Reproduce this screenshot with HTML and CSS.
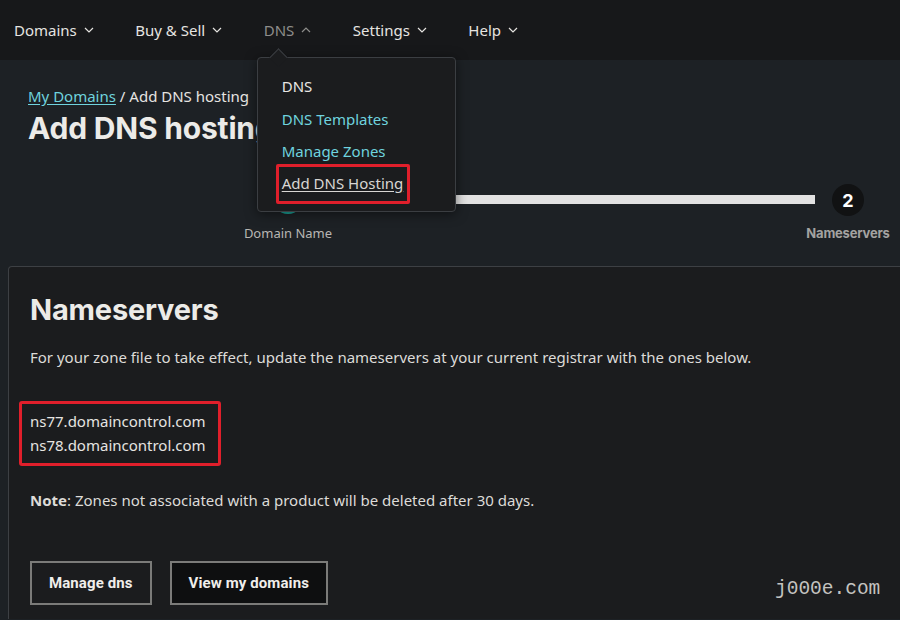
FILE: index.html
```html
<!DOCTYPE html>
<html lang="en">
<head>
<meta charset="utf-8">
<title>Add DNS hosting</title>
<link rel="stylesheet" href="styles.css">
</head>
<body>
<header class="nav">
  <div class="nav-item">Domains <svg class="chev" viewBox="0 0 10 6"><path d="M1 1l4 4 4-4"/></svg></div>
  <div class="nav-item">Buy &amp; Sell <svg class="chev" viewBox="0 0 10 6"><path d="M1 1l4 4 4-4"/></svg></div>
  <div class="nav-item active">DNS <svg class="chev" viewBox="0 0 10 6"><path d="M1 5l4-4 4 4"/></svg>
    <div class="dropdown">
      <span class="caret"></span>
      <a class="dd-item dd-current">DNS</a>
      <a class="dd-item dd-link">DNS Templates</a>
      <a class="dd-item dd-link">Manage Zones</a>
      <a class="dd-item dd-hl"><span>Add DNS Hosting</span></a>
    </div>
  </div>
  <div class="nav-item">Settings <svg class="chev" viewBox="0 0 10 6"><path d="M1 1l4 4 4-4"/></svg></div>
  <div class="nav-item">Help <svg class="chev" viewBox="0 0 10 6"><path d="M1 1l4 4 4-4"/></svg></div>
</header>
<main class="page">
  <div class="crumbs"><a class="crumb-link">My Domains</a> / Add DNS hosting</div>
  <h1 class="title">Add DNS hosting</h1>
  <div class="stepper">
    <span class="dot dot-done"></span>
    <span class="bar"></span>
    <span class="dot dot-cur">2</span>
    <span class="step-label">Domain Name</span>
    <span></span>
    <span class="step-label step-label-cur">Nameservers</span>
  </div>
  <section class="card">
    <h2 class="card-title">Nameservers</h2>
    <p class="lead">For your zone file to take effect, update the nameservers at your current registrar with the ones below.</p>
    <div class="ns-box">
      <div>ns77.domaincontrol.com</div>
      <div>ns78.domaincontrol.com</div>
    </div>
    <p class="note"><b>Note</b>: Zones not associated with a product will be deleted after 30 days.</p>
    <div class="actions">
      <button class="btn">Manage dns</button>
      <button class="btn btn-dark">View my domains</button>
    </div>
    <div class="watermark">j000e.com</div>
  </section>
</main>
</body>
</html>
```
FILE: styles.css
```css
* { box-sizing: border-box; }
html, body { margin: 0; padding: 0; }
body {
  width: 900px;
  height: 620px;
  overflow: hidden;
  background: #1d2125;
  color: #e8e6e3;
  font-family: "Noto Sans", "Open Sans", sans-serif;
  font-size: 15px;
}
.nav {
  height: 60px;
  background: #17181a;
  display: flex;
  align-items: center;
  padding-left: 14px;
  position: relative;
  z-index: 5;
}
.nav-item {
  display: flex;
  align-items: center;
  gap: 7px;
  margin-right: 41.5px;
  font-size: 15px;
  color: #e6e4e1;
  position: relative;
}
.nav-item.active { color: #8e8d8b; }
.chev { width: 10px; height: 6px; fill: none; stroke: currentColor; stroke-width: 1.2; }
.dropdown {
  position: absolute;
  top: 37px;
  left: -7px;
  width: 199px;
  height: 155px;
  background: #1b1c1e;
  border: 1px solid #3b3e42;
  border-radius: 4px;
  padding: 18px 0 0 24px;
  display: flex;
  flex-direction: column;
  box-shadow: 0 2px 12px rgba(0,0,0,0.5);
}
.caret {
  position: absolute;
  top: -7px;
  left: 14px;
  width: 13px;
  height: 13px;
  background: #1b1c1e;
  border-left: 1px solid #3b3e42;
  border-top: 1px solid #3b3e42;
  transform: rotate(45deg);
}
.dd-item {
  flex-shrink: 0;
  font-size: 15px;
  line-height: 20px;
  margin-bottom: 12.5px;
}
.dd-current { color: #e8e6e3; }
.dd-link { color: #6fd3de; }
.dd-hl {
  margin-left: -6px;
  margin-top: -10px;
  width: 134px;
  height: 40px;
  border: 3px solid #e01f2b;
  border-radius: 2px;
  padding: 6px 0 0 3px;
  color: #d8d6d3;
}
.dd-hl span { text-decoration: underline; text-underline-offset: 2px; }
.page { padding: 0 0 0 28px; }
.crumbs {
  margin-top: 26px;
  font-size: 15px;
  line-height: 20px;
  color: #e6e4e1;
}
.crumb-link { color: #6fd3de; text-decoration: underline; text-underline-offset: 2px; }
.title {
  margin: 4px 0 0;
  font-family: "Inter", sans-serif;
  font-weight: 700;
  font-size: 30px;
  line-height: 36px;
  color: #ecebe8;
  letter-spacing: -0.2px;
}
.stepper {
  display: grid;
  grid-template-columns: 100px 1fr 100px;
  grid-template-rows: 32px auto;
  margin: 38px 2px 0 210px;
  row-gap: 8px;
  align-items: center;
}
.dot {
  justify-self: center;
  width: 32px;
  height: 32px;
  border-radius: 50%;
  position: relative;
  z-index: 2;
}
.dot-done { background: #1aa59a; margin-top: -4px; }
.dot-cur {
  background: #111213;
  color: #fff;
  font-family: "Inter", sans-serif;
  font-weight: 700;
  font-size: 18px;
  display: flex;
  align-items: center;
  justify-content: center;
}
.bar {
  height: 9px;
  background: #e2e2e2;
  margin: -2px -17px 0 -38px;
}
.step-label {
  justify-self: center;
  font-size: 13px;
  color: #b8b6b3;
  white-space: nowrap;
}
.step-label-cur {
  font-weight: 700;
  color: #a4a3a1;
  font-family: "Inter", sans-serif;
  font-size: 13px;
  letter-spacing: -0.2px;
}
.card {
  margin: 24px -20px 0 -20px;
  background: #1b1c1e;
  border: 1px solid #3d4044;
  border-bottom: 0;
  border-radius: 4px 4px 0 0;
  padding: 23px 0 0 21px;
  height: 353px;
  position: relative;
}
.card-title {
  margin: 0;
  font-family: "Inter", sans-serif;
  font-weight: 700;
  font-size: 29px;
  line-height: 40px;
  color: #ecebe8;
  letter-spacing: -0.2px;
}
.lead {
  margin: 16px 0 0;
  font-size: 15px;
  line-height: 22px;
  color: #dddbd8;
}
.ns-box {
  margin: 33px 0 0 -11px;
  width: 202px;
  height: 65px;
  border: 3px solid #e01f2b;
  border-radius: 3px;
  padding: 5px 0 0 8px;
  font-size: 15px;
  line-height: 24px;
  color: #e6e4e1;
}
.note {
  margin: 23px 0 0;
  font-size: 15px;
  line-height: 22px;
  color: #dddbd8;
}
.note b { font-weight: 700; }
.actions {
  display: flex;
  gap: 18px;
  margin-top: 50px;
}
.btn {
  height: 44px;
  padding: 0 17px;
  background: #1b1c1e;
  border: 2px solid #7b7b79;
  color: #f0eeeb;
  font-family: "Roboto", sans-serif;
  font-weight: 700;
  font-size: 15px;
  letter-spacing: 0.1px;
  border-radius: 0;
}
.btn-dark { background: #0e0f10; }
.watermark {
  position: absolute;
  left: 766px;
  top: 311px;
  font-family: "Liberation Mono", monospace;
  font-size: 19.5px;
  color: #c4c3c0;
}
```
